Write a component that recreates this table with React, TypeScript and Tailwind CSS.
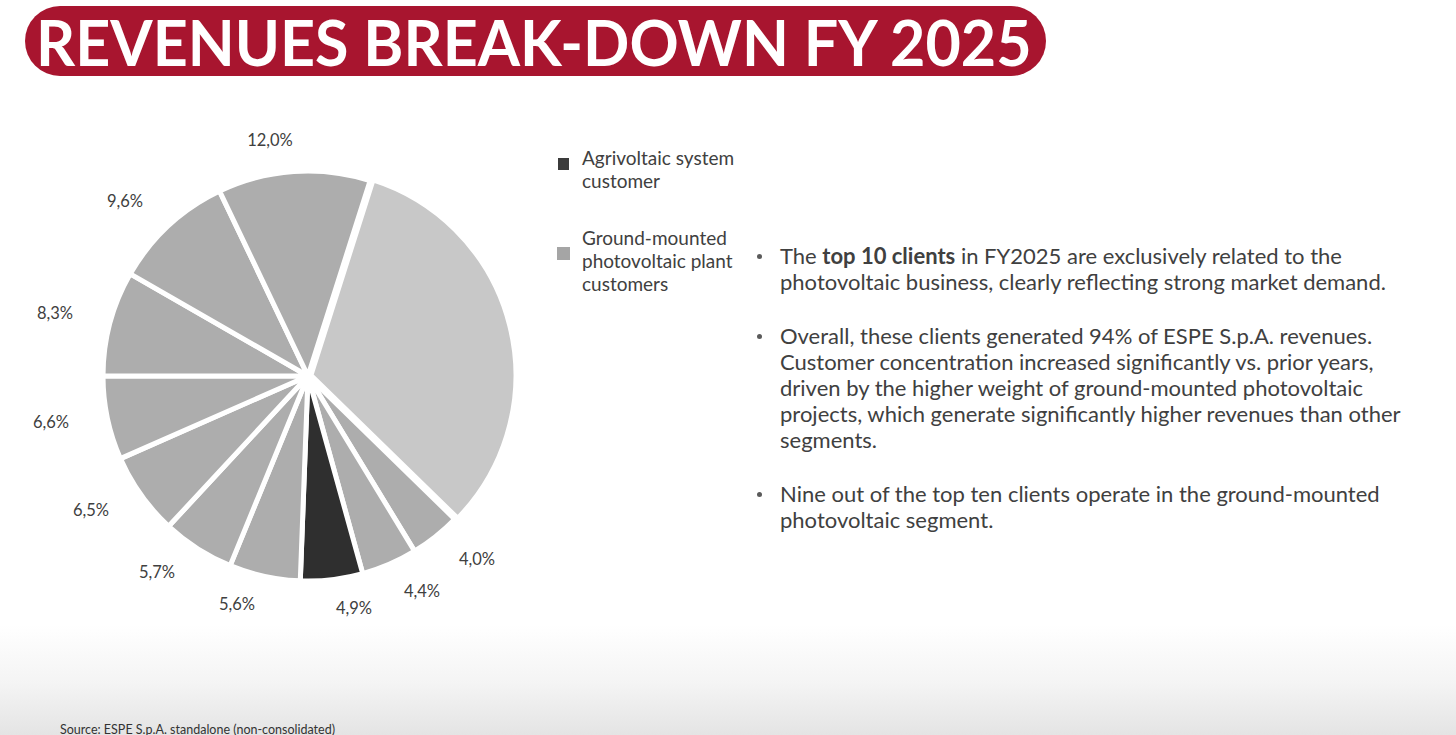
import React from "react";

const slices = [
  { v: 32.4, c: "#c8c8c8", big: true },
  { v: 4.0, c: "#adadad" },
  { v: 4.4, c: "#adadad" },
  { v: 4.9, c: "#2f2f2f" },
  { v: 5.6, c: "#adadad" },
  { v: 5.7, c: "#adadad" },
  { v: 6.5, c: "#adadad" },
  { v: 6.6, c: "#adadad" },
  { v: 8.3, c: "#adadad" },
  { v: 9.6, c: "#adadad" },
  { v: 12.0, c: "#adadad" },
];

const labels = [
  { t: "12,0%", x: 270, y: 20 },
  { t: "9,6%", x: 125, y: 81 },
  { t: "8,3%", x: 55, y: 193 },
  { t: "6,6%", x: 51, y: 302 },
  { t: "6,5%", x: 91, y: 390 },
  { t: "5,7%", x: 157, y: 452 },
  { t: "5,6%", x: 237, y: 484 },
  { t: "4,9%", x: 354, y: 488 },
  { t: "4,4%", x: 422, y: 471 },
  { t: "4,0%", x: 477, y: 439 },
];

function Pie() {
  const cx = 308;
  const cy = 256;
  const r = 205;
  const total = slices.reduce((s, x) => s + x.v, 0);
  let a = 17.64;
  const pt = (deg: number, rad: number, ox = 0, oy = 0) => {
    const t = (deg * Math.PI) / 180;
    return [cx + ox + rad * Math.sin(t), cy + oy - rad * Math.cos(t)];
  };
  const paths = slices.map((s, i) => {
    const span = (s.v / total) * 360;
    const a0 = a;
    const a1 = a + span;
    a = a1;
    let ox = 0;
    let oy = 0;
    if (s.big) {
      const mid = ((a0 + a1) / 2) * (Math.PI / 180);
      ox = 3 * Math.sin(mid);
      oy = -3 * Math.cos(mid);
    }
    const [x0, y0] = pt(a0, r, ox, oy);
    const [x1, y1] = pt(a1, r, ox, oy);
    const large = span > 180 ? 1 : 0;
    const d = `M${cx + ox},${cy + oy} L${x0},${y0} A${r},${r} 0 ${large} 1 ${x1},${y1} Z`;
    return <path key={i} d={d} fill={s.c} stroke="#ffffff" strokeWidth={5} strokeLinejoin="round" />;
  });
  return (
    <svg width={540} height={500} viewBox="0 0 540 500" className="shrink-0">
      {paths}
      {labels.map((l) => (
        <text
          key={l.t}
          x={l.x}
          y={l.y}
          textAnchor="middle"
          dominantBaseline="central"
          fill="#404040"
          fontSize={16.5}
          fontFamily="Lato, 'Open Sans', sans-serif"
        >
          {l.t}
        </text>
      ))}
    </svg>
  );
}

function Bullet({ children, first }: { children: React.ReactNode; first?: boolean }) {
  return (
    <li className={`flex ${first ? "" : "mt-[28px]"}`}>
      <span className="flex h-[26px] w-[23px] shrink-0 items-center">
        <span className="h-[5px] w-[5px] rounded-full bg-[#5a5a5a]" />
      </span>
      <span className="w-[640px]">{children}</span>
    </li>
  );
}

export default function App() {
  return (
    <div className="relative w-[1456px] h-[735px] overflow-hidden bg-[linear-gradient(to_bottom,#ffffff_0%,#ffffff_85%,#f4f4f4_93%,#e4e4e4_100%)] font-['Lato','Open_Sans',sans-serif] text-[#404040]">
      <div className="pt-[6px] pl-[25px]">
        <div className="flex h-[70px] w-[1021px] items-center rounded-full bg-[#a8152f] pl-[11px]">
          <span className="origin-left scale-x-[0.968] text-[63px] font-bold leading-none text-white whitespace-nowrap">
            REVENUES BREAK-DOWN FY 2025
          </span>
        </div>
      </div>

      <div className="mt-[44px] flex">
        <Pie />
        <div className="ml-[16px] mt-[26px] w-[190px] shrink-0 text-[19px] leading-[23px]">
          <div className="flex items-start">
            <span className="ml-[2px] mt-[12px] h-[12px] w-[11px] shrink-0 bg-[#3b3b3b]" />
            <span className="ml-[13px]">
              Agrivoltaic system
              <br />
              customer
            </span>
          </div>
          <div className="mt-[34px] flex items-start">
            <span className="ml-[1px] mt-[21px] h-[13px] w-[13px] shrink-0 bg-[#a5a5a5]" />
            <span className="ml-[12px]">
              Ground-mounted
              <br />
              photovoltaic plant
              <br />
              customers
            </span>
          </div>
        </div>
        <ul className="ml-[11px] mt-[123px] text-[22px] leading-[26px]">
          <Bullet first>
            The <b className="font-bold">top 10 clients</b> in FY2025 are exclusively related to the
            photovoltaic business, clearly reflecting strong market demand.
          </Bullet>
          <Bullet>
            Overall, these clients generated 94% of ESPE S.p.A. revenues. Customer concentration
            increased significantly vs. prior years, driven by the higher weight of ground-mounted
            photovoltaic projects, which generate significantly higher revenues than other segments.
          </Bullet>
          <Bullet>
            Nine out of the top ten clients operate in the ground-mounted photovoltaic segment.
          </Bullet>
        </ul>
      </div>

      <div className="absolute left-[60px] top-[722px] text-[12.5px] leading-[16px] text-[#333333] whitespace-nowrap">
        Source: ESPE S.p.A. standalone (non-consolidated)
      </div>
    </div>
  );
}
